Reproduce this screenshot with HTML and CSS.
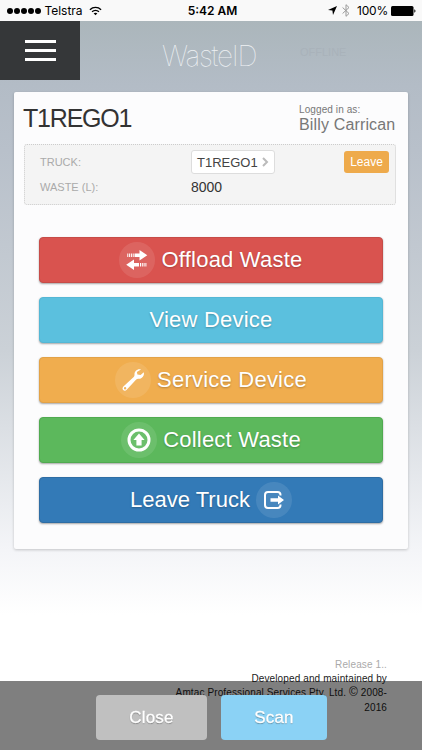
FILE: index.html
```html
<!DOCTYPE html>
<html lang="en">
<head>
    <meta charset="UTF-8">
    <meta name="viewport" content="width=device-width, initial-scale=1.0">
    <title>WasteID</title>
    <link rel="stylesheet" href="styles.css">
</head>
<body>
    <div class="status-bar">
        <div class="carrier">
            <span class="dots"><i></i><i></i><i></i><i></i><i></i></span>
            <span class="carrier-name">Telstra</span>
            <svg class="wifi" width="13" height="10" viewBox="0 0 14 10" fill="none" stroke="#000" stroke-width="1.5">
                <path d="M1 3.600C4.400.3 9.600.3 13 3.600M3.300 5.900c2.100-2 5.300-2 7.400 0"/>
                <path d="M5 7.500c1.100-1 2.900-1 4 0L7 9.500z" fill="#000" stroke="none"/>
            </svg>
        </div>
        <div class="clock">5:42 AM</div>
        <div class="indicators">
            <svg class="location" width="9" height="9" viewBox="0 0 9 9"><path d="M9 0L5 9 4.400 4.600 0 4z"/></svg>
            <svg class="bluetooth" width="8" height="13" viewBox="0 0 8 13" fill="none" stroke="#999" stroke-width="1"><path d="M.6 3.500l6.400 6L4 12.300V.7L7 3.500l-6.400 6"/></svg>
            <span class="percent">100%</span>
            <svg class="battery" width="25" height="10" viewBox="0 0 25 10"><rect width="22.500" height="10" rx="1.500"/><path d="M23.300 3.200c1.600.6 1.600 3 0 3.600z"/></svg>
        </div>
    </div>

    <header class="header">
        <button class="menu" aria-label="Menu"><span></span><span></span><span></span></button>
        <div class="logo">WasteID</div>
        <div class="offline">OFFLINE</div>
    </header>

    <main class="card">
        <div class="card-head">
            <h1>T1REGO1</h1>
            <div class="user">
                <small>Logged in as:</small>
                <span>Billy Carrican</span>
            </div>
        </div>

        <div class="details">
            <span class="label">TRUCK:</span>
            <button class="truck-select">
                <span>T1REGO1</span>
                <svg width="7" height="10" viewBox="0 0 7 10" fill="none" stroke="#bbb" stroke-width="2"><path d="M1 1l4 4-4 4"/></svg>
            </button>
            <button class="leave">Leave</button>
            <span class="label">WASTE (L):</span>
            <span class="value">8000</span>
        </div>

        <div class="actions">
            <button class="btn red">
                <span class="icon">
                    <svg width="22" height="20" viewBox="0 0 22 20" fill="#fff">
                        <path d="M8.500 3.500h5V0L21.300 5.200l-7.800 5.200V7h-5zM6.700 3.500h1v3.500h-1zM4.900 3.500h1v3.500h-1zM3.100 3.500h1v3.500h-1zM1.300 3.500h1v3.500h-1z"/>
                        <path d="M13 13H8V9.500L.2 14.700 8 19.900v-3.400h5zM14 13h1v3.500h-1zM15.800 13h1v3.500h-1zM17.600 13h1v3.500h-1zM19.400 13h1v3.500h-1z"/>
                    </svg>
                </span>
                <span>Offload Waste</span>
            </button>
            <button class="btn cyan"><span>View Device</span></button>
            <button class="btn orange">
                <span class="icon">
                    <svg width="24" height="24" viewBox="0 0 24 24">
                        <path fill="#fff" fill-rule="evenodd" d="M20 1.500c-3.500-1-6.800 1.700-6.500 5.200.1.900-.2 1.600-.8 2.200l-10.300 9.600c-1.100 1.100-1.100 2.600-.2 3.500s2.500.9 3.500-.2l9.500-10.300c.6-.6 1.300-.9 2.200-.8 3.500.4 6.300-2.900 5.400-6.500l-3.200 2.900-3.200-.7-.5-2.400zM4.100 19.100a1.200 1.200 0 1 1 0 2.400 1.200 1.200 0 0 1 0-2.400z"/>
                    </svg>
                </span>
                <span>Service Device</span>
            </button>
            <button class="btn green">
                <span class="icon">
                    <svg width="24" height="24" viewBox="0 0 24 24">
                        <circle cx="12" cy="12" r="10" fill="none" stroke="#fff" stroke-width="3"/>
                        <path fill="#fff" d="M12 5.500l5.600 6.500h-3v5.500H9.400V12h-3z"/>
                    </svg>
                </span>
                <span>Collect Waste</span>
            </button>
            <button class="btn blue">
                <span>Leave Truck</span>
                <span class="icon">
                    <svg width="22" height="18" viewBox="0 0 22 18">
                        <path fill="none" stroke="#fff" stroke-width="2" d="M17.500 4.500V4a3 3 0 0 0-3-3H5a3 3 0 0 0-3 3v10a3 3 0 0 0 3 3h9.500a3 3 0 0 0 3-3v-.5"/>
                        <path fill="#fff" d="M7.500 7.200h7.500V4.500L21 9l-6 4.500v-2.700H7.500z"/>
                    </svg>
                </span>
            </button>
        </div>
    </main>

    <footer class="credits">
        <p class="release">Release 1..</p>
        <p>Developed and maintained by</p>
        <p>Amtac Professional Services Pty. Ltd. <span class="copy">©</span> 2008-</p>
        <p>2016</p>
    </footer>

    <div class="bottom-bar">
        <button class="close">Close</button>
        <button class="scan">Scan</button>
    </div>
</body>
</html>
```

FILE: styles.css
```css
* {
    margin: 0;
    padding: 0;
    box-sizing: border-box;
}

body {
    height: 750px;
    overflow: hidden;
    font-family: "Liberation Sans", Arial, sans-serif;
    color: #333;
    background: linear-gradient(#abb6bb 20px, #b3bcc6 85px, #b8c0ca 150px, #cbd1d7 350px, #f4f5f8 550px, #fff 615px);
}

button {
    border: none;
    font-family: inherit;
}

svg {
    display: block;
}

/* Phone status bar */
.status-bar {
    display: grid;
    grid-template-columns: 1fr 60px 1fr;
    align-items: center;
    height: 21px;
    padding: 0 6px 0 7px;
    background: #f9f9f9;
    color: #000;
    font-family: Inter, sans-serif;
    font-size: 12px;
}

.carrier,
.indicators {
    display: flex;
    align-items: center;
}

.dots {
    display: flex;
    gap: 1.1px;
    margin-right: 3px;
}

.dots i {
    width: 6px;
    height: 6px;
    border-radius: 50%;
    background: #000;
}

.wifi {
    margin-left: 6px;
}

.clock {
    padding-left: 2px;
    font-weight: 600;
    white-space: nowrap;
    text-align: center;
}

.indicators {
    justify-content: flex-end;
}

.location {
    margin-right: 5px;
}

.bluetooth {
    margin-right: 7px;
}

.percent {
    margin-right: 3px;
    letter-spacing: -.2px;
}

/* Header */
.header {
    display: grid;
    grid-template-columns: 80px 1fr 122px;
    height: 71px;
}

.menu {
    display: flex;
    flex-direction: column;
    align-items: center;
    justify-content: center;
    gap: 6px;
    height: 59px;
    background: #353739;
}

.menu span {
    width: 31px;
    height: 3px;
    background: #fff;
}

.logo {
    padding: 17px 0 0 82px;
    font-family: Inter, sans-serif;
    font-size: 28px;
    font-weight: 100;
    line-height: 36px;
    letter-spacing: -1.2px;
    color: #eef1f4;
    white-space: nowrap;
}

.offline {
    padding-top: 25px;
    font-size: 11px;
    color: #a9b2ba;
}

/* Card */
.card {
    width: 394px;
    height: 457px;
    margin-left: 14px;
    padding: 12px 11px 0 10px;
    border-radius: 2px;
    background: #fcfcfd;
    box-shadow: 0 1px 3px rgba(0, 0, 0, .2);
}

.card-head {
    display: flex;
    justify-content: space-between;
    height: 40px;
}

h1 {
    margin-left: -1px;
    font-size: 25px;
    font-weight: normal;
    line-height: 29px;
    letter-spacing: -1.2px;
}

.user {
    width: 98px;
    color: #777;
    white-space: nowrap;
}

.user small {
    display: block;
    font-size: 10px;
    line-height: 12px;
    letter-spacing: .1px;
}

.user span {
    display: block;
    font-size: 16px;
    line-height: 17px;
    letter-spacing: .15px;
}

.details {
    display: grid;
    grid-template-columns: 151px 1fr 45px;
    grid-template-rows: 24px 25px;
    align-items: center;
    width: 372px;
    height: 61px;
    padding: 5px 6px 0 15px;
    border: 1px dotted #ccc;
    border-radius: 3px;
    background: #f4f4f4;
}

.label {
    font-size: 11px;
    color: #aaa;
}

.truck-select {
    display: flex;
    align-items: center;
    justify-content: space-between;
    width: 84px;
    height: 24px;
    padding: 0 5px;
    border: 1px solid #ddd;
    border-radius: 3px;
    background: #fff;
    color: #444;
    font-size: 13px;
}

.leave {
    height: 22px;
    border-radius: 3px;
    background: #eeaa4b;
    color: #fff;
    font-size: 12px;
}

.value {
    font-size: 14px;
}

/* Action buttons */
.actions {
    display: flex;
    flex-direction: column;
    gap: 14px;
    padding: 32px 14px 0 15px;
}

.btn {
    display: flex;
    align-items: center;
    justify-content: center;
    gap: 6px;
    width: 344px;
    height: 46px;
    border: 1px solid;
    border-radius: 4px;
    box-shadow: 0 1px 2px rgba(0, 0, 0, .35);
    color: #fff;
    font-size: 22px;
    letter-spacing: .22px;
    text-shadow: 0 1px 2px rgba(0, 0, 0, .25);
    white-space: nowrap;
}

.icon {
    display: flex;
    align-items: center;
    justify-content: center;
    width: 36px;
    height: 36px;
    border-radius: 50%;
    background: rgba(255, 255, 255, .1);
}

.red {
    background: #d9534f;
    border-color: #c64c48;
}

.cyan {
    background: #5bc0de;
    border-color: #54b7d5;
}

.orange {
    background: #f0ad4e;
    border-color: #e2a247;
}

.green {
    background: #5cb85c;
    border-color: #50aa50;
}

.blue {
    background: #337ab7;
    border-color: #2e6da4;
    letter-spacing: 0;
}

/* Footer */
.credits {
    padding: 109px 35px 0 0;
    font-size: 10px;
    line-height: 14.2px;
    letter-spacing: .12px;
    text-align: right;
    color: #222;
}

.copy {
    font-size: 12px;
    line-height: 1;
}

.release {
    color: #aaa;
}

.bottom-bar {
    position: fixed;
    left: 0;
    right: 0;
    bottom: 0;
    display: flex;
    gap: 14px;
    height: 69px;
    padding: 14px 0 0 96px;
    background: rgba(0, 0, 0, .5);
}

.bottom-bar button {
    height: 45px;
    border-radius: 4px;
    color: #fff;
    font-size: 17px;
    letter-spacing: .2px;
    -webkit-text-stroke: .3px #fff;
    text-shadow: 0 1px 1px rgba(0, 0, 0, .35);
}

.close {
    width: 111px;
    background: #c0c0c0;
}

.scan {
    width: 106px;
    background: #8bd2f5;
}
```
